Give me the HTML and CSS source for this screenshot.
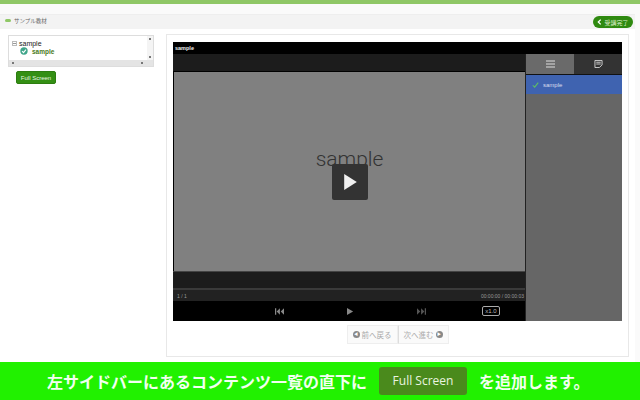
FILE: index.html
```html
<!DOCTYPE html>
<html lang="ja">
<head>
<meta charset="utf-8">
<title>サンプル教材</title>
<link rel="stylesheet" href="styles.css">
</head>
<body>
<div class="topbar"></div>
<div class="page">
  <header class="head">
    <div class="crumb"><span class="pill"></span><span>サンプル教材</span></div>
    <button class="done"><svg class="chev" viewBox="0 0 8 10"><path d="M6 1 2 5l4 4" fill="none" stroke="#fff" stroke-width="2.2"/></svg>受講完了</button>
  </header>
  <div class="main">
    <aside class="side">
      <div class="tree">
        <div class="tree-body">
          <div class="tree-list">
            <div class="node"><span class="minus"></span>sample</div>
            <div class="leaf"><svg class="ok" viewBox="0 0 10 10"><circle cx="5" cy="5" r="4.6" fill="#3fa58a"/><path d="M2.6 5.2 4.4 7l3-3.6" fill="none" stroke="#fff" stroke-width="1.4"/></svg>sample</div>
          </div>
          <div class="vscroll"><span class="up"></span><span class="dn"></span></div>
        </div>
        <div class="hscroll"><span class="lf"></span><span class="rt"></span></div>
      </div>
      <button class="fs">Full Screen</button>
    </aside>
    <section class="panel">
      <div class="player">
        <div class="ptitle">sample</div>
        <div class="pbody">
          <div class="stage">
            <div class="band"></div>
            <div class="slide">
              <span class="slide-text">sample</span>
              <div class="bigplay"><svg viewBox="0 0 16 20" class="bigtri"><path d="M1 1v18l14-9z" fill="#f0f0f0"/></svg></div>
            </div>
            <div class="band2"></div>
            <div class="prog"><span>1 / 1</span><span>00:00:00 / 00:00:03</span></div>
            <div class="ctrl">
              <svg class="ci" viewBox="0 0 11 8"><path d="M0 0h1.500v8H0zM6 0v8L2 4zM11 0v8L7 4z" fill="#888"/></svg>
              <svg class="ci" viewBox="0 0 8 8"><path d="M0 0v8l7-4z" fill="#888"/></svg>
              <svg class="ci" viewBox="0 0 11 8"><path d="M11 0H9.500v8H11zM5 0v8l4-4zM0 0v8l4-4z" fill="#555"/></svg>
              <span class="rate">x1.0</span>
            </div>
          </div>
          <div class="list">
            <div class="tabs">
              <div class="tab on"><svg viewBox="0 0 9 7" class="ti"><path d="M0 0h9v1H0zM0 3h9v1H0zM0 6h9v1H0z" fill="#ddd"/></svg></div>
              <div class="tab"><svg viewBox="0 0 9 9" class="ti"><path d="M.5.500h8v5l-3 3h-5zM2 2.500h5M2 4.500h5" fill="none" stroke="#ddd"/></svg></div>
            </div>
            <div class="item"><svg class="tick" viewBox="0 0 8 7"><path d="M.8 3.800 3 6 7.200.8" fill="none" stroke="#5fc060" stroke-width="1.200"/></svg>sample</div>
          </div>
        </div>
      </div>
      <div class="pager">
        <button class="pg"><span class="dot">◀</span>前へ戻る</button><button class="pg">次へ進む<span class="dot">▶</span></button>
      </div>
    </section>
  </div>
</div>
<footer class="banner">
  <span>左サイドバーにあるコンテンツ一覧の直下に</span>
  <span class="bfs">Full Screen</span>
  <span>を追加します。</span>
</footer>
</body>
</html>
```
FILE: styles.css
```css
* { box-sizing: border-box; }
html, body { margin: 0; height: 400px; overflow: hidden; }
body { width: 640px; background: #fff; font-family: "Liberation Sans", "Noto Sans CJK JP", sans-serif; display: flex; flex-direction: column; }
button { font-family: inherit; padding: 0; }
.topbar { height: 4px; background: #8fc766; flex: none; }
.page { flex: 1; background: #fafafa; padding: 10px 5px 0 0; min-height: 0; display: flex; flex-direction: column; }
.head { height: 15px; background: #f3f3f3; border-top: 1px solid #eee; display: flex; align-items: center; justify-content: space-between; padding: 0 3px 0 5px; flex: none; }
.crumb { display: flex; align-items: center; gap: 3px; font-size: 5.500px; color: #666; padding-bottom: 3px; }
.pill { width: 6px; height: 3px; border-radius: 2px; background: #8fc766; }
.done { width: 40px; height: 12px; border: 0; border-radius: 6px; background: #2f8a10; color: #ddeecc; font-size: 6px; display: flex; align-items: center; justify-content: center; gap: 2px; margin-right: -1px; }
.chev { width: 5px; height: 6px; }
.main { flex: 1; display: flex; background: #fff; padding: 5px 0 5px 0; min-height: 0; }
.side { width: 166px; flex: none; padding: 1px 0 0 8px; }
.tree { width: 146px; height: 32px; border: 1px solid #ddd; background: #fff; display: flex; flex-direction: column; }
.tree-body { flex: 1; display: flex; min-height: 0; }
.tree-list { flex: 1; padding: 3px 0 0 3px; font-size: 7px; color: #222; }
.node { display: flex; align-items: center; height: 8px; }
.minus { width: 5px; height: 5px; border: 1px solid #bbb; margin-right: 2px; background: linear-gradient(#999, #999) center / 3px 1px no-repeat; }
.leaf { display: flex; align-items: center; gap: 4px; padding-left: 8px; height: 8px; color: #4a7a1a; font-weight: bold; font-size: 6.500px; }
.ok { width: 8px; height: 8px; }
.vscroll { width: 6px; display: flex; flex-direction: column; justify-content: space-between; align-items: center; padding: 2px 0; background: #f4f4f4; }
.hscroll { height: 6px; background: #e4e4e4; display: flex; justify-content: space-between; align-items: center; padding: 0 10px 0 3px; }
.up, .dn, .lf, .rt { width: 2px; height: 2px; background: #777; }
.fs { display: block; width: 40px; height: 13px; margin: 4px 0 0 8px; border: 1px solid #2d7d10; border-radius: 2px; background: #348f14; color: #e8f4e0; font-size: 6px; }
.panel { width: 463px; flex: none; border: 1px solid #e8e8e8; background: #fff; padding: 7px 6px 0; }
.player { height: 279px; background: #000; display: flex; flex-direction: column; }
.ptitle { height: 12px; flex: none; color: #eee; font-size: 5.500px; font-weight: bold; line-height: 12px; padding-left: 2px; }
.pbody { flex: 1; display: flex; min-height: 0; }
.stage { width: 352px; flex: none; display: flex; flex-direction: column; }
.band { height: 18px; flex: none; background: #1c1c1c; border-bottom: 1px solid #000; }
.slide { height: 199px; flex: none; background: #808080; margin-left: 1px; display: flex; justify-content: center; position: relative; }
.slide-text { margin-top: 75px; font-family: Roboto, sans-serif; font-weight: 300; font-size: 21px; line-height: 24px; color: #333; }
.bigplay { position: absolute; left: 158px; top: 92px; width: 36px; height: 36px; background: #333; border-radius: 2px; display: flex; align-items: center; justify-content: center; }
.bigtri { width: 15px; height: 18px; }
.band2 { height: 19px; flex: none; background: #1c1c1c; border-top: 1px solid #444; border-bottom: 2px solid #3a3a3a; }
.prog { height: 11px; flex: none; background: #222; color: #999; font-size: 5px; display: flex; justify-content: space-between; align-items: center; padding: 0 1px 0 4px; }
.ctrl { flex: 1; display: flex; align-items: center; position: relative; padding-left: 102px; gap: 62px; }
.ci { width: 9px; height: 7px; }
.rate { position: absolute; left: 309px; top: 5px; width: 18px; height: 10px; border: 1px solid #aaa; border-radius: 2px; color: #bbb; font-size: 6px; line-height: 8px; text-align: center; }
.list { flex: 1; background: #666; border-left: 1px solid #222; }
.tabs { display: flex; height: 21px; border-bottom: 1px solid #111; }
.tab { flex: 1; background: #333; display: flex; align-items: center; justify-content: center; }
.tab.on { background: #6a6a6a; }
.ti { width: 9px; height: 8px; }
.item { height: 19px; background: #3f63b0; color: #dde; font-size: 6px; display: flex; align-items: center; gap: 4px; padding-left: 6px; }
.tick { width: 7px; height: 6px; }
.pager { display: flex; justify-content: center; margin-top: 4px; }
.pg { width: 51px; height: 19px; border: 1px solid #eee; background: #fafafa; color: #aaa; font-size: 7.500px; display: flex; align-items: center; justify-content: center; gap: 2px; }
.pg + .pg { border-left-color: #ddd; }
.dot { width: 7px; height: 7px; border-radius: 50%; background: #888; color: #fff; font-size: 4px; line-height: 7px; text-align: center; }
.banner { height: 38px; flex: none; background: #21f100; color: #f2fff0; font-size: 16px; font-weight: bold; display: flex; align-items: center; padding-left: 47px; }
.bfs { width: 88px; height: 28px; margin: 0 12px; background: #4a8a1c; border-radius: 3px; color: #eaf5e0; font-size: 12px; font-weight: normal; font-family: "Open Sans", sans-serif; text-align: center; line-height: 28px; }
```
